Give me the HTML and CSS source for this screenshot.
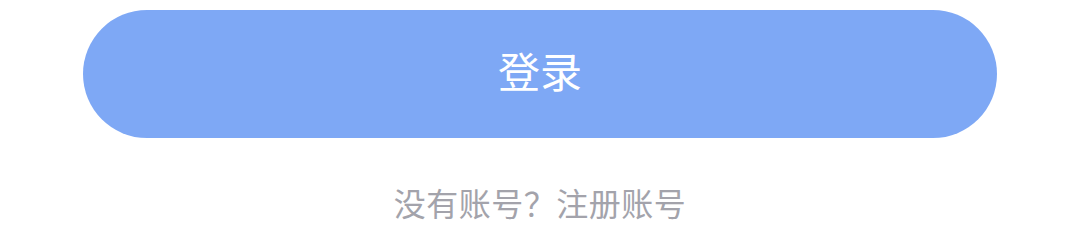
FILE: index.html
```html
<!DOCTYPE html>
<html lang="zh">
<head>
<meta charset="utf-8">
<link rel="stylesheet" href="styles.css">
</head>
<body>
<div class="page">
  <button class="login-btn">登录</button>
  <div class="register">没有账号？注册账号</div>
</div>
</body>
</html>
```
FILE: styles.css
```css
html, body {
  margin: 0;
  padding: 0;
  background: #ffffff;
}
.page {
  width: 1080px;
  height: 240px;
  display: flex;
  flex-direction: column;
  align-items: center;
  padding-top: 10px;
  box-sizing: border-box;
  font-family: "Noto Sans CJK SC", "Noto Sans", sans-serif;
}
.login-btn {
  width: 914px;
  height: 128px;
  border: none;
  border-radius: 64px;
  background: #7ea8f5;
  color: #ffffff;
  font-family: "Noto Sans CJK SC", "Noto Sans", sans-serif;
  font-size: 42px;
  font-weight: 400;
  line-height: 50px;
  display: flex;
  align-items: center;
  justify-content: center;
  padding: 0 0 8px 0;
  box-sizing: border-box;
}
.register {
  margin-top: 44px;
  font-size: 32px;
  line-height: 40px;
  letter-spacing: 0.5px;
  color: #a3a3ab;
}
```
